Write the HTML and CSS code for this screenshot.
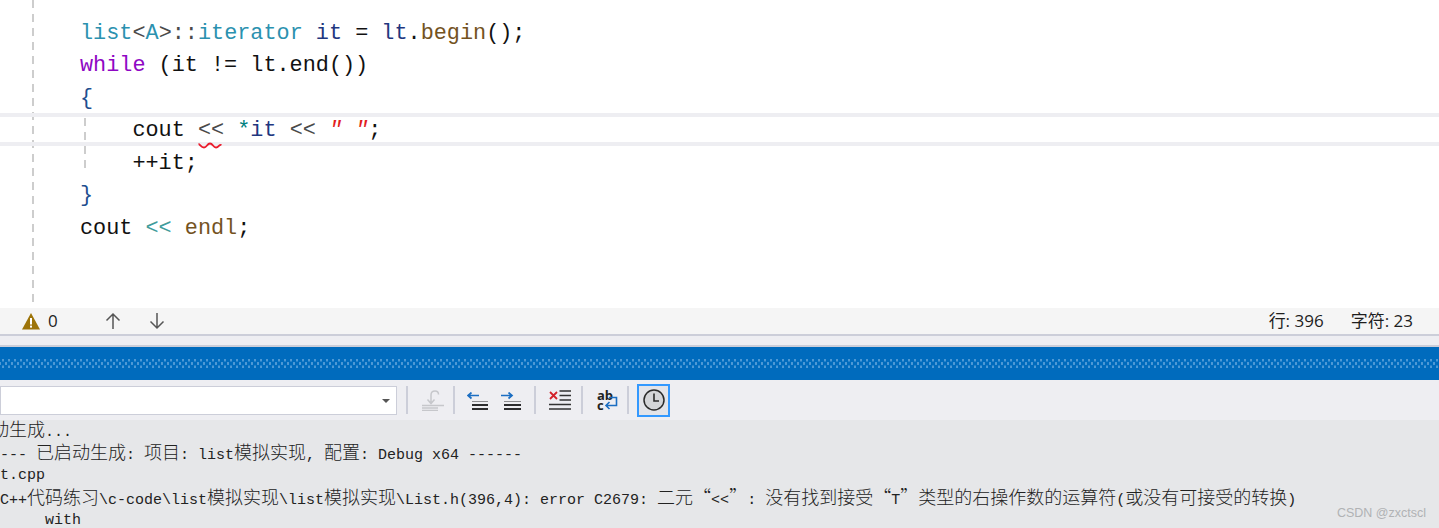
FILE: index.html
```html
<!DOCTYPE html>
<html lang="zh-CN">
<head>
<meta charset="utf-8">
<title>Visual Studio</title>
<link rel="stylesheet" href="styles.css">
</head>
<body>
<div class="page">
  <section class="editor">
    <div class="code-line"><span class="ty">list</span><span class="op">&lt;</span><span class="ty">A</span><span class="op">&gt;::</span><span class="ty">iterator</span> <span class="va">it</span> = <span class="va">lt</span>.<span class="fn">begin</span>();</div>
    <div class="code-line"><span class="kw">while</span> (it != lt.end())</div>
    <div class="code-line"><span class="br">{</span></div>
    <div class="code-line current">    cout <span class="op squiggle">&lt;&lt;<svg class="wave" viewBox="0 0 24 7" width="24" height="7"><path d="M0.500 2 C2 2 3 5.500 6 5.500 C9 5.500 9 1.500 12 1.500 C15 1.500 15 5.500 18 5.500 C21 5.500 21 2 23.500 3" fill="none" stroke="#ea1c2c" stroke-width="1.800"/></svg></span> <span class="st">*</span><span class="va">it</span> <span class="op">&lt;&lt;</span> <span class="str">" "</span>;</div>
    <div class="code-line">    ++it;</div>
    <div class="code-line"><span class="br">}</span></div>
    <div class="code-line">cout <span class="st2">&lt;&lt;</span> <span class="fn">endl</span>;</div>
  </section>

  <div class="status">
    <svg class="warn" viewBox="0 0 18 18" width="18" height="18"><path d="M9 1 L18 17.500 H0 Z" fill="#9d7409"/><rect x="8" y="6" width="2" height="6.500" fill="#fff"/><rect x="8" y="13.600" width="2" height="2" fill="#fff"/></svg>
    <span class="count">0</span>
    <svg class="arrow up" viewBox="0 0 16 18" width="16" height="18"><path d="M8 17 V2 M1.500 8.500 L8 2 L14.500 8.500" fill="none" stroke="#555" stroke-width="1.500"/></svg>
    <svg class="arrow down" viewBox="0 0 16 18" width="16" height="18"><path d="M8 1 V16 M1.500 9.500 L8 16 L14.500 9.500" fill="none" stroke="#555" stroke-width="1.500"/></svg>
    <span class="spacer"></span>
    <span class="pos">行: 396</span>
    <span class="pos chars">字符: 23</span>
  </div>

  <div class="gap"></div>

  <div class="titlebar"><div class="grip"></div></div>

  <div class="toolbar">
    <div class="combo"><span class="caret"></span></div>
    <span class="sep s1"></span>
    <svg class="tool t-a" viewBox="0 0 22 21" width="22" height="21"><path d="M9 13 V5 C9 2 11 1 13 1 C15 1 16.500 2.500 16.500 4.500 M5.500 9.500 L9 13.500 L12.500 9.500" fill="none" stroke="#c6c7cb" stroke-width="1.500"/><path d="M0 15.500 H22 M0 18 H16 M0 20.500 H16" stroke="#c6c7cb" stroke-width="1.500"/></svg>
    <span class="sep s2"></span>
    <svg class="tool t-b" viewBox="0 0 21 19" width="21" height="19"><path d="M12 3.500 H1 M4.500 0.500 L1 3.500 L4.500 6.500" fill="none" stroke="#1b6ec2" stroke-width="1.700"/><path d="M5 9.500 H21" stroke="#8d8d90" stroke-width="1"/><path d="M5 13 H21 M5 17 H21" stroke="#2c2c2e" stroke-width="2"/></svg>
    <svg class="tool t-c" viewBox="0 0 20 19" width="20" height="19"><path d="M0 3.500 H11 M7.500 0.500 L11 3.500 L7.500 6.500" fill="none" stroke="#1b6ec2" stroke-width="1.700"/><path d="M3 9.500 H20" stroke="#8d8d90" stroke-width="1"/><path d="M3 13 H20 M3 17 H20" stroke="#2c2c2e" stroke-width="2"/></svg>
    <span class="sep s3"></span>
    <svg class="tool t-d" viewBox="0 0 22 20" width="22" height="20"><path d="M1 2 L8 9 M8 2 L1 9" stroke="#d3222a" stroke-width="1.800"/><path d="M10.500 1 H22 M10.500 5.500 H22 M10.500 10 H22 M0 14.500 H22 M0 19 H22" stroke="#333" stroke-width="1.300"/></svg>
    <span class="sep s4"></span>
    <div class="wrap-icon">
      <span class="wrap-ab">ab<br>c</span>
      <svg class="wrap-arrow" viewBox="0 0 14 14" width="14" height="14"><path d="M5 1.500 H12.500 V9.500 H2 M5.500 6 L2 9.500 L5.500 13" fill="none" stroke="#1b6ec2" stroke-width="1.600"/></svg>
    </div>
    <span class="sep s5"></span>
    <div class="toggle"><svg viewBox="0 0 24 24" width="24" height="24"><circle cx="12" cy="12" r="10" fill="#d4d5d8" stroke="#2b2b2b" stroke-width="1.500"/><path d="M12 5.500 V13 H17" fill="none" stroke="#2b2b2b" stroke-width="1.600"/></svg></div>
  </div>

  <section class="output">
    <div class="out-line"><span class="z">已启动生成</span>...</div>
    <div class="out-line">1&gt;------ <span class="z">已启动生成</span>: <span class="z">项目</span>: list<span class="z">模拟实现</span>, <span class="z">配置</span>: Debug x64 ------</div>
    <div class="out-line">1&gt;List.cpp</div>
    <div class="out-line">1&gt;D:\C++<span class="z">代码练习</span>\c-code\list<span class="z">模拟实现</span>\list<span class="z">模拟实现</span>\List.h(396,4): error C2679: <span class="z">二元“</span>&lt;&lt;<span class="z">”</span>: <span class="z">没有找到接受“</span>T<span class="z">”类型的右操作数的运算符</span>(<span class="z">或没有可接受的转换</span>)</div>
    <div class="out-line">1&gt;        with</div>
    <div class="mark">CSDN @zxctscl</div>
  </section>
</div>
</body>
</html>
```
FILE: styles.css
```css
* { box-sizing: border-box; }
html, body { margin: 0; padding: 0; }
body { background: #fff; overflow: hidden; }
.page { width: 1439px; height: 528px; overflow: hidden; display: flex; flex-direction: column; }
.page > * { flex: none; }

.editor {
  position: relative;
  height: 308px;
  padding: 17.500px 0 0 80px;
  background: #fff;
  font: 21.830px/32.600px "Liberation Mono", monospace;
  color: #111;
}
.editor::before {
  content: "";
  position: absolute;
  left: 32px; top: 0; bottom: 0; width: 2px;
  background: repeating-linear-gradient(to bottom, #cdcdcd 0 8px, transparent 8px 14px);
}
.editor::after {
  content: "";
  position: absolute;
  left: 84px; top: 118px; height: 56px; width: 2px;
  background: repeating-linear-gradient(to bottom, #cdcdcd 0 8px, transparent 8px 14px);
}
.code-line { height: 32.600px; white-space: pre; }
.code-line.current { position: relative; }
.code-line.current::before {
  content: "";
  position: absolute;
  left: -80px; right: 0; top: -2.300px; bottom: 1.900px;
  border-top: 4px solid #eeeef2;
  border-bottom: 4px solid #eeeef2;
}
.ty { color: #2b91af; }
.op { color: #4a4a4a; }
.va { color: #1f377f; }
.fn { color: #74531f; }
.kw { color: #8f08c4; }
.br { color: #1f4f8f; }
.st { color: #008080; }
.st2 { color: #3f9c9c; }
.str { color: #e21e1e; font-style: italic; }
.squiggle { position: relative; }
.wave { position: absolute; left: 0; top: 24px; }

.status {
  height: 28px;
  display: flex;
  align-items: center;
  padding: 0 25px 0 22px;
  background: #f5f5f5;
  border-bottom: 2px solid #ccced9;
  font: 17px/26px "Open Sans", "Noto Sans CJK SC", sans-serif;
  color: #1e1e1e;
}
.count { margin-left: 8px; }
.arrow.up { margin-left: 47px; }
.arrow.down { margin-left: 28px; }
.spacer { flex: 1; }
.pos { position: relative; left: -1px; }
.chars { margin-left: 27px; }

.gap { height: 11px; background: #eeeef2; border-bottom: 2px solid #ccced9; }

.titlebar {
  height: 33px;
  display: flex;
  align-items: center;
  background: #006bbd;
}
.grip {
  width: 100%;
  height: 9px;
  background-image:
    radial-gradient(circle at center, #4f9ad6 1.100px, transparent 1.400px),
    radial-gradient(circle at center, #4f9ad6 1.100px, transparent 1.400px);
  background-size: 6px 7px, 6px 7px;
  background-position: 0 -2.500px, 3px 1px;
}

.toolbar {
  height: 40px;
  display: flex;
  align-items: center;
  background: #eeeef2;
}
.combo {
  width: 397px;
  height: 29px;
  margin-top: 1px;
  background: #fff;
  border: 1px solid #ccced9;
  display: flex;
  align-items: center;
  justify-content: flex-end;
  padding-right: 6px;
}
.caret { width: 0; height: 0; border-left: 4px solid transparent; border-right: 4px solid transparent; border-top: 4px solid #555; }
.sep { width: 2px; height: 28px; background: #ccced9; flex: none; }
.tool { flex: none; }
.s1 { margin: 0 14px 0 9px; }
.s2 { margin: 0 12px 0 9px; }
.s3 { margin: 0 13px 0 13px; }
.s4 { margin: 0 14px 0 10px; }
.s5 { margin: 0 8px 0 9px; }
.t-a { margin-top: 1px; }
.t-b { margin-top: 3px; }
.t-c { margin: 3px 0 0 13px; }
.t-d { margin-top: 0; }
.wrap-icon { position: relative; width: 21px; height: 18px; flex: none; }
.wrap-ab { display: block; font: 700 13px/9.500px "Open Sans", sans-serif; color: #222; }
.wrap-arrow { position: absolute; right: 0; bottom: -1px; }
.toggle {
  width: 33px; height: 33px;
  border: 2px solid #3399ff;
  display: flex; align-items: center; justify-content: center;
  background: #e3e4e9;
}

.output {
  position: relative;
  flex: 1 1 0;
  min-height: 0;
  overflow: hidden;
  background: #e6e7e9;
  margin-left: -45px;
  font: 15px/22.500px "Liberation Mono", monospace;
  color: #222;
}
.out-line { height: 22.500px; white-space: pre; }
.z { font-family: "Noto Sans CJK SC", sans-serif; font-size: 18px; line-height: 16px; font-weight: 300; }
.mark {
  position: absolute;
  right: 13px; bottom: 7px;
  font: 12.500px/16px "Liberation Sans", sans-serif;
  color: #b0b2b4;
}
```
